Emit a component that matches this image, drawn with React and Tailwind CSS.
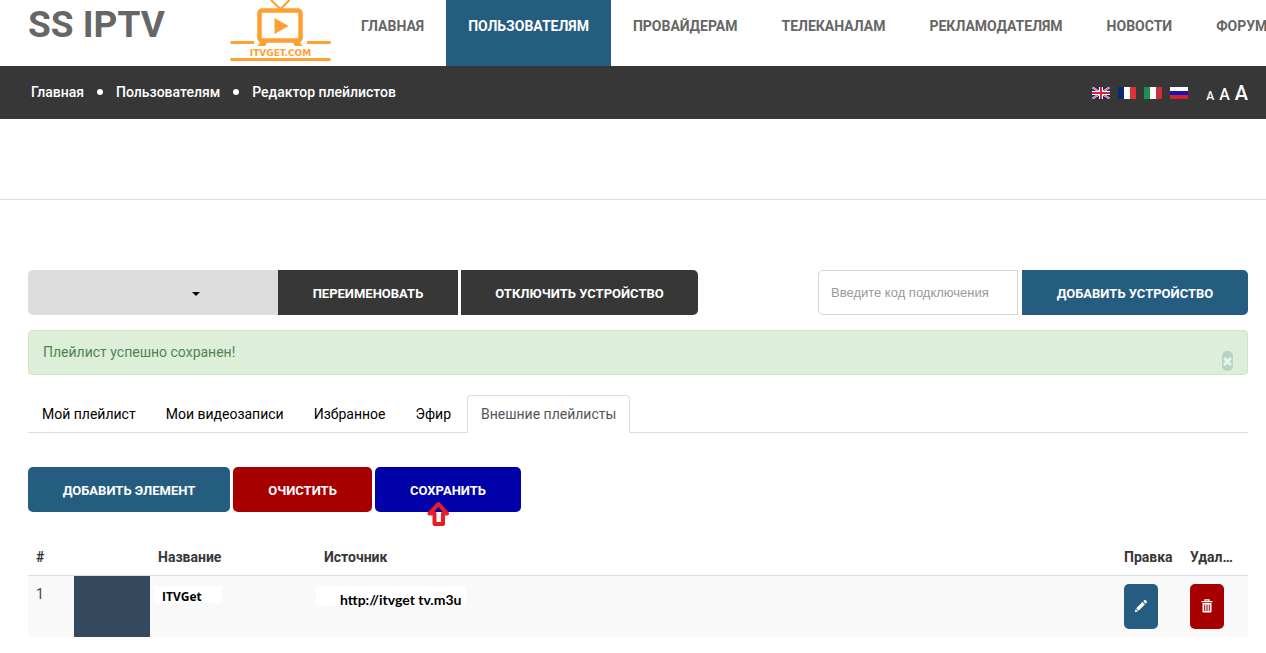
import React from "react";

const navItems = ["Главная", "Пользователям", "Провайдерам", "Телеканалам", "Рекламодателям", "Новости", "Форум"];
const tabs = ["Мой плейлист", "Мои видеозаписи", "Избранное", "Эфир", "Внешние плейлисты"];

function TvLogo() {
  return (
    <svg width="101" height="62" viewBox="0 0 101 62" role="img" aria-label="ITVGET.COM" className="block">
      <g stroke="#ff9f32" fill="none">
        <path d="M41 0 L50.500 9 L59.500 0" strokeWidth="2" />
        <rect x="29.500" y="10.500" width="41" height="30" rx="2.500" strokeWidth="4.500" />
        <path d="M0.500 42.500 H24 M77 42.500 H100.500 M0.500 59.500 H100.500" strokeWidth="3" />
      </g>
      <path d="M44.500 18 L58.500 26 L44.500 34 Z M31 41 H38 L35 46 H27.500 Z M62 41 H69 L72.500 46 H65 Z" fill="#ff9f32" />
      <text x="50.500" y="56" textAnchor="middle" fill="#ff9f32" className="font-['DejaVu_Sans'] text-[9px] font-bold">
        ITVGET.COM
      </text>
    </svg>
  );
}

function UkFlag() {
  return (
    <svg width="18" height="12" viewBox="0 0 18 12" aria-hidden="true">
      <rect width="18" height="12" fill="#1c2674" />
      <path d="M0 0 L18 12 M18 0 L0 12" stroke="#fff" strokeWidth="2" />
      <path d="M0 0 L18 12 M18 0 L0 12" stroke="#d33648" strokeWidth="1" />
      <path d="M9 0 V12 M0 6 H18" stroke="#fff" strokeWidth="4" />
      <path d="M9 0 V12 M0 6 H18" stroke="#d4243a" strokeWidth="2" />
    </svg>
  );
}

function StripeFlag({ colors, horizontal }) {
  return (
    <svg width="18" height="12" viewBox="0 0 18 12" aria-hidden="true">
      {colors.map((c, i) =>
        horizontal ? (
          <rect key={c} y={i * 4} width="18" height="4" fill={c} />
        ) : (
          <rect key={c} x={i * 6} width="6" height="12" fill={c} />
        )
      )}
    </svg>
  );
}

function PencilIcon() {
  return (
    <svg width="14" height="14" viewBox="0 0 14 14" fill="#fff" aria-hidden="true">
      <path d="M9.200 2.300 L10.500 1 Q11 .6 11.500 1 L12.900 2.400 Q13.300 2.900 12.900 3.400 L11.600 4.700 Z M8.500 3 L10.900 5.400 L4.600 11.700 L2.200 9.300 Z M1.700 9.900 L4 12.200 L.8 13.200 Z" />
    </svg>
  );
}

function TrashIcon() {
  return (
    <svg width="12" height="14" viewBox="0 0 12 14" aria-hidden="true">
      <path d="M4 2.500 V.8 H8 V2.500 M.5 2.700 H11.500" fill="none" stroke="#fff" strokeWidth="1.200" />
      <path d="M1.500 4 H10.500 V12.500 Q10.500 13.500 9.500 13.500 H2.500 Q1.500 13.500 1.500 12.500 Z" fill="#fff" />
      <path d="M3.500 5.500 V12 M5.200 5.500 V12 M6.800 5.500 V12 M8.500 5.500 V12" stroke="#a80000" strokeWidth=".8" />
    </svg>
  );
}

function UpArrow() {
  return (
    <svg width="24" height="26" viewBox="0 0 24 26" aria-hidden="true" className="pointer-events-none absolute left-[51px] top-[34px]">
      <path d="M10 12 H15 V21 H10 Z" fill="#fff" />
      <path d="M12.500 3 L21 12.500 H17 V23 H8.500 V12.500 H3.500 Z" fill="none" stroke="#ed1c24" strokeWidth="4" strokeLinejoin="round" />
    </svg>
  );
}

const button = "h-[45px] pt-[3px] text-[13px] font-bold uppercase text-white";

export default function App() {
  return (
    <div className="overflow-x-hidden bg-white font-['Roboto','Noto_Sans',sans-serif] text-sm text-[#444]">
      <header className="flex h-[66px] items-start pl-7">
        <a href="#" className="w-[202px] shrink-0 text-[37px] leading-[50px] font-bold whitespace-nowrap text-[#666]">
          SS IPTV
        </a>
        <a href="#" className="shrink-0">
          <TvLogo />
        </a>
        <nav className="ml-2 flex">
          {navItems.map((item, i) => (
            <a
              key={item}
              href="#"
              className={
                "h-[66px] shrink-0 px-[22px] pt-4 leading-5 font-bold uppercase " +
                (i === 1 ? "bg-[#255d80] text-white" : "text-[#666]")
              }
            >
              {item}
            </a>
          ))}
        </nav>
      </header>

      <div className="flex h-[53px] items-center justify-between bg-[#373737] pr-[18px] pl-[31px] text-white">
        <nav aria-label="Навигация" className="flex items-center gap-[13px] pb-[2px] font-medium">
          <a href="#">Главная</a>
          <span className="size-[6px] rounded-full bg-white" />
          <a href="#">Пользователям</a>
          <span className="size-[6px] rounded-full bg-white" />
          <a href="#">Редактор плейлистов</a>
        </nav>
        <div className="flex items-center gap-[18px]">
          <div className="flex gap-2">
            <a href="#" aria-label="English"><UkFlag /></a>
            <a href="#" aria-label="Français"><StripeFlag colors={["#0c2a73", "#ffffff", "#e1303a"]} /></a>
            <a href="#" aria-label="Italiano"><StripeFlag colors={["#1f8f4e", "#fffffe", "#c9303a"]} /></a>
            <a href="#" aria-label="Русский"><StripeFlag horizontal colors={["#ffffff", "#1a12b8", "#d3222e"]} /></a>
          </div>
          <div className="flex items-baseline gap-[5px] leading-6 font-medium">
            <button className="text-xs">A</button>
            <button className="text-base">A</button>
            <button className="text-xl">A</button>
          </div>
        </div>
      </div>

      <div className="h-[81px] border-b border-[#ddd]" />

      <main className="pt-[70px] pr-[18px] pb-4 pl-7">
        <div className="flex justify-between">
          <div className="flex">
            <div className="relative">
              <select aria-label="Устройство" className="block h-[45px] w-[250px] appearance-none rounded-l-[5px] bg-[#ddd]">
                <option value=""></option>
              </select>
              <svg width="8" height="4" viewBox="0 0 8 4" aria-hidden="true" className="pointer-events-none absolute top-[22px] left-[164px]">
                <path d="M0 0 H8 L4 4 Z" fill="#000" />
              </svg>
            </div>
            <button className={button + " w-[180px] bg-[#373737]"}>Переименовать</button>
            <button className={button + " ml-[3px] w-[237px] rounded-r-[5px] bg-[#373737]"}>Отключить устройство</button>
          </div>
          <div className="flex gap-1">
            <input
              type="text"
              aria-label="Код подключения"
              placeholder="Введите код подключения"
              className="h-[45px] w-[200px] rounded-l-[5px] border border-[#d5d5d5] px-3 font-['Liberation_Sans',sans-serif] text-[13px] placeholder:text-[#999]"
            />
            <button className={button + " w-[226px] rounded-r-[5px] bg-[#255d80]"}>Добавить устройство</button>
          </div>
        </div>

        <div role="alert" className="mt-[15px] flex h-[45px] items-start justify-between rounded-[4px] border border-[#d0e6c4] bg-[#ddefd8] px-[14px] text-[#4e8453]">
          <p className="pt-[11px] leading-5">Плейлист успешно сохранен!</p>
          <button aria-label="Закрыть" className="mt-5 flex h-5 w-[11px] items-center justify-center rounded-[5px] bg-[#b8d2c7]">
            <svg width="9" height="9" viewBox="0 0 9 9" aria-hidden="true">
              <path d="M1 1 L8 8 M8 1 L1 8" stroke="#e8f5e6" strokeWidth="3" />
            </svg>
          </button>
        </div>

        <div role="tablist" className="mt-5 flex gap-[2px] border-b border-[#ddd] text-black">
          {tabs.map((tab, i) => (
            <button
              key={tab}
              role="tab"
              aria-selected={i === 4}
              className={
                "-mb-px h-[38px] rounded-t-[4px] border px-[13px] " +
                (i === 4 ? "border-[#ddd] border-b-white bg-white text-[#555]" : "border-transparent")
              }
            >
              {tab}
            </button>
          ))}
        </div>

        <div className="mt-[34px] flex gap-[3px]">
          <button className={button + " w-[202px] rounded-[5px] bg-[#255d80]"}>Добавить элемент</button>
          <button className={button + " w-[139px] rounded-[5px] bg-[#a80000]"}>Очистить</button>
          <div className="relative">
            <button className={button + " w-[146px] rounded-[5px] bg-[#0000a8]"}>Сохранить</button>
            <UpArrow />
          </div>
        </div>

        <table className="mt-[27px] w-full table-fixed border-collapse text-left">
          <thead>
            <tr className="h-9 border-b border-[#ddd] text-[#373737]">
              <th className="w-[46px] px-2 font-bold">#</th>
              <th className="w-[76px]" aria-label="Логотип"></th>
              <th className="w-[166px] px-2 font-bold">Название</th>
              <th className="px-2 font-bold">Источник</th>
              <th className="w-[66px] px-2 font-bold">Правка</th>
              <th className="w-[66px] truncate px-2 font-bold">Удалить</th>
            </tr>
          </thead>
          <tbody>
            <tr className="h-[62px] bg-[#f9f9f9] align-top">
              <td className="px-2 pt-2 leading-5">1</td>
              <td className="bg-[#34495e]"></td>
              <td className="px-1 pt-[10px]">
                <span className="block h-[17px] w-[68px] bg-white pl-2 font-['Open_Sans',sans-serif] text-xs leading-[22px] font-bold text-black">
                  ITVGet
                </span>
              </td>
              <td className="pt-[10px]">
                <span className="block h-5 w-[150px] bg-white pl-6 font-['Lato',sans-serif] text-sm leading-7 font-bold whitespace-nowrap text-black">
                  http://itvget tv.m3u
                </span>
              </td>
              <td className="px-2 pt-2">
                <button aria-label="Правка" className="flex h-[45px] w-[34px] items-center justify-center rounded-[5px] bg-[#255d80]">
                  <PencilIcon />
                </button>
              </td>
              <td className="px-2 pt-2">
                <button aria-label="Удалить" className="flex h-[45px] w-[34px] items-center justify-center rounded-[5px] bg-[#a80000]">
                  <TrashIcon />
                </button>
              </td>
            </tr>
          </tbody>
        </table>
      </main>
    </div>
  );
}
